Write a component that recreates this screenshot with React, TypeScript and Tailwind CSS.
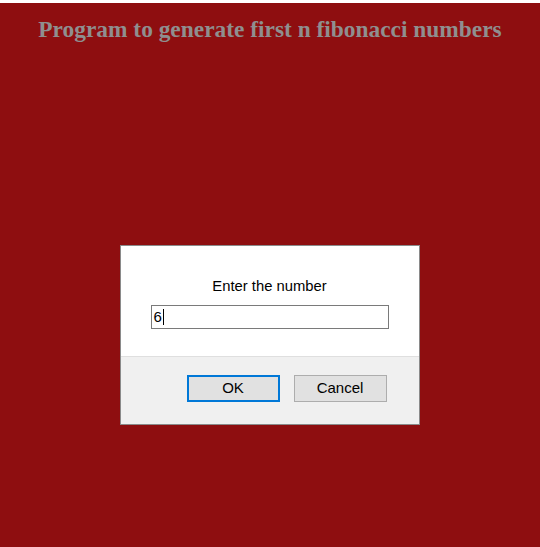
export default function App() {
  return (
    <div className="flex h-[547px] w-[540px] flex-col bg-white">
      <div className="h-[3px] bg-white" />
      <div className="flex flex-1 flex-col items-center bg-[#8e0e10]">
        <h1 className="mt-[12px] text-center font-['Liberation_Serif',serif] text-[23.4px] font-bold leading-[28px] text-[#8f8f8f]">
          Program to generate first n fibonacci numbers
        </h1>
        <div className="mt-[202px] ml-[-1px] flex w-[300px] flex-col border border-[#8a8a8a] bg-white font-['Liberation_Sans',Arial,sans-serif]">
          <div className="flex h-[111px] flex-col items-center border-b border-[#dfdfdf]">
            <p className="mt-[31px] text-[14.8px] leading-[18px] text-black">Enter the number</p>
            <div className="mt-[10px] flex h-[24px] w-[238px] items-center border border-[#7a7a7a] bg-white pl-[2px] text-[15px] text-black">
              <span>6</span>
              <span className="ml-[1px] h-[16px] w-[1px] bg-black" />
            </div>
          </div>
          <div className="flex h-[67px] justify-end gap-[14px] bg-[#f0f0f0] pr-[32px] pt-[18px]">
            <button className="flex h-[27px] w-[93px] items-center justify-center border-2 border-[#0078d7] bg-[#e1e1e1] text-[15px] text-black">
              OK
            </button>
            <button className="flex h-[27px] w-[93px] items-center justify-center border border-[#adadad] bg-[#e1e1e1] text-[15px] text-black">
              Cancel
            </button>
          </div>
        </div>
      </div>
    </div>
  )
}
